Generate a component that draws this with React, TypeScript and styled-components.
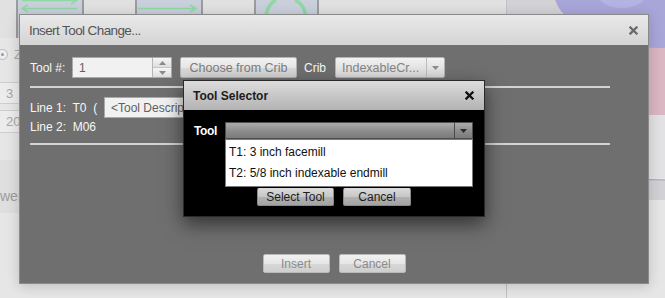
import React from 'react';
import styled, { createGlobalStyle } from 'styled-components';

const GlobalStyle = createGlobalStyle`
  html, body {
    margin: 0;
    padding: 0;
  }
  body {
    font-family: "Liberation Sans", Arial, sans-serif;
    background: #e6e6e6;
  }
`;

const Page = styled.div`
   position: relative;
   width: 665px;
   height: 298px;
   overflow: hidden;
   background: #e7e7e7;
   font-size: 12px;
`;

/* ---------- background app ---------- */

const Workspace = styled.div`
   display: grid;
   grid-template-columns: 507px 158px;
   height: 100%;
`;

const SidePanel = styled.div`
   display: flex;
   flex-direction: column;
   border-right: 1px solid #c2c2c2;
   background: #e6e6e6;
`;

const Toolbar = styled.div`
   display: flex;
   gap: 51px;
   padding-left: 16px;
   height: 38px;
   flex: none;
   background: #e1e1e1;
`;

const ToolBox = styled.div<{ $w: number }>`
   width: ${({ $w }) => $w}px;
   height: 38px;
   box-sizing: border-box;
   border-left: 2px solid #9c9c9c;
   border-right: 2px solid #9c9c9c;
   background: #c9d0dc;
   svg { display: block; }
`;

const RadioRow = styled.div`
   display: flex;
   align-items: center;
   gap: 6px;
   margin: 11px 0 0 -3px;
   height: 10px;
   color: #a8a8a8;
   font-size: 13px;
`;

const Radio = styled.span`
   width: 9px;
   height: 9px;
   border-radius: 50%;
   border: 1px solid #b8b8b8;
   background: #eee;
   display: flex;
   align-items: center;
   justify-content: center;
   &::after {
      content: '';
      width: 3px;
      height: 3px;
      border-radius: 50%;
      background: #9a9a9a;
   }
`;

const GhostField = styled.div<{ $top: number; $h: number }>`
   margin: ${({ $top }) => $top}px 0 0 -3px;
   width: 140px;
   height: ${({ $h }) => $h}px;
   box-sizing: border-box;
   border: 1px solid #cdcdcd;
   background: #ececec;
   color: #a6a6a6;
   font-size: 13px;
   padding-left: 8px;
   display: flex;
   align-items: center;
`;

const GhostBand = styled.div`
   margin-top: 27px;
   height: 53px;
   background: #dfdfdf;
   display: flex;
   align-items: flex-end;
   padding-bottom: 9px;
   box-sizing: border-box;
   color: #9c9c9c;
   font-size: 14px;
`;

const Viewport = styled.div`
   svg { display: block; }
`;

/* ---------- main dialog ---------- */

const Dialog = styled.div`
   position: absolute;
   left: 19px;
   top: 14px;
   width: 630px;
   height: 270px;
   box-sizing: border-box;
   border: 1px solid #8a8a8a;
   background: #6f6f6f;
   box-shadow: 0 2px 12px rgba(0, 0, 0, 0.18);
   display: flex;
   flex-direction: column;
`;

const DialogHeader = styled.div`
   flex: none;
   height: 30px;
   display: flex;
   align-items: center;
   justify-content: space-between;
   padding: 0 10px 0 9px;
   background: linear-gradient(#e9e9e9, #d4d4d4);
   color: #555;
   font-size: 13.5px;
   letter-spacing: -0.6px;
`;

const DialogBody = styled.div`
   flex: 1;
   display: flex;
   flex-direction: column;
   padding: 12px 0 10px 10px;
   color: #f6f6f6;
`;

const Row = styled.div<{ $top?: number }>`
   display: flex;
   align-items: center;
   height: 21px;
   margin-top: ${({ $top }) => $top ?? 0}px;
`;

const Label = styled.span<{ $w: number }>`
   width: ${({ $w }) => $w}px;
   flex: none;
   white-space: nowrap;
`;

const TextBox = styled.div<{ $w: number }>`
   width: ${({ $w }) => $w}px;
   height: 21px;
   box-sizing: border-box;
   flex: none;
   display: flex;
   border: 1px solid #a9a9a9;
   background: #f1f1f1;
   color: #606060;
   font-size: 12px;
   span {
      flex: 1;
      padding-left: 6px;
      display: flex;
      align-items: center;
      white-space: nowrap;
      overflow: hidden;
   }
`;

const Spinner = styled.div`
   width: 18px;
   display: flex;
   flex-direction: column;
   border-left: 1px solid #b5b5b5;
`;

const SpinHalf = styled.div`
   flex: 1;
   display: flex;
   align-items: center;
   justify-content: center;
   background: linear-gradient(#f5f5f5, #dedede);
   & + & {
      border-top: 1px solid #c6c6c6;
   }
`;

const LightButton = styled.div<{ $w: number; $ml?: number }>`
   width: ${({ $w }) => $w}px;
   margin-left: ${({ $ml }) => $ml ?? 0}px;
   height: 21px;
   box-sizing: border-box;
   flex: none;
   border: 1px solid #b4b4b4;
   border-radius: 2px;
   background: linear-gradient(#f2f2f2 0%, #e7e7e7 50%, #d9d9d9 52%, #d2d2d2 100%);
   color: #7c7c7c;
   display: flex;
   align-items: center;
   justify-content: center;
   font-size: 12.5px;
`;

const DropSelect = styled.div<{ $w: number }>`
   width: ${({ $w }) => $w}px;
   height: 21px;
   box-sizing: border-box;
   flex: none;
   display: flex;
   border: 1px solid #b4b4b4;
   border-radius: 2px;
   background: linear-gradient(#f2f2f2, #d8d8d8);
   color: #848484;
   font-size: 12.5px;
   span {
      flex: 1;
      padding-left: 6px;
      display: flex;
      align-items: center;
   }
`;

const DropArrow = styled.div<{ $dark?: boolean }>`
   width: 17px;
   flex: none;
   border-left: 1px solid ${({ $dark }) => ($dark ? '#4a4a4a' : '#bdbdbd')};
   display: flex;
   align-items: center;
   justify-content: center;
`;

const Rule = styled.div<{ $top: number }>`
   width: 580px;
   height: 2px;
   flex: none;
   margin-top: ${({ $top }) => $top}px;
   background: #d3d3d3;
`;

const PlainLine = styled.div`
   height: 14px;
   line-height: 14px;
   margin-top: 2px;
`;

const Footer = styled.div`
   margin-top: auto;
   display: flex;
   justify-content: center;
   gap: 9px;
   padding-right: 10px;
`;

const FooterButton = styled.div`
   width: 67px;
   height: 19px;
   box-sizing: border-box;
   border: 1px solid #b9b9b9;
   border-radius: 2px;
   background: linear-gradient(#f1f1f1 0%, #e6e6e6 50%, #d7d7d7 52%, #cfcfcf 100%);
   color: #8a8a8a;
   display: flex;
   align-items: center;
   justify-content: center;
`;

/* ---------- tool selector ---------- */

const Selector = styled.div`
   position: absolute;
   left: 163px;
   top: 65px;
   width: 302px;
   height: 137px;
   box-sizing: border-box;
   border: 1px solid #2a2a2a;
   background: #000;
   box-shadow: 0 7px 18px rgba(0, 0, 0, 0.55);
   display: flex;
   flex-direction: column;
`;

const SelectorHeader = styled.div`
   flex: none;
   height: 29px;
   display: flex;
   align-items: center;
   justify-content: space-between;
   padding: 0 10px 0 9px;
   background: linear-gradient(#dcdcdc, #b3b3b3);
   color: #1c1c1c;
   font-weight: bold;
   font-size: 12px;
`;

const SelectorBody = styled.div`
   position: relative;
   flex: 1;
   padding: 12px 0 0 10px;
   color: #fff;
`;

const ToolRow = styled.div`
   display: flex;
   align-items: center;
   height: 17px;
`;

const ToolLabel = styled.span`
   width: 31px;
   font-weight: bold;
   letter-spacing: -0.4px;
`;

const DarkSelect = styled.div`
   width: 248px;
   height: 17px;
   box-sizing: border-box;
   display: flex;
   border: 1px solid #4f4f4f;
   background: linear-gradient(#ababab, #8c8c8c 55%, #7b7b7b);
   span { flex: 1; }
`;

const OptionList = styled.div`
   position: absolute;
   left: 41px;
   top: 29px;
   width: 248px;
   height: 48px;
   box-sizing: border-box;
   border: 1px solid #7a7a7a;
   background: #fff;
   color: #111;
   padding-top: 2px;
`;

const Option = styled.div`
   height: 21px;
   line-height: 21px;
   padding-left: 3px;
   white-space: nowrap;
`;

const SelectorButtons = styled.div`
   display: flex;
   justify-content: center;
   gap: 9px;
   margin: 49px 10px 0 0;
`;

const DarkButton = styled.div<{ $w: number }>`
   width: ${({ $w }) => $w}px;
   height: 18px;
   box-sizing: border-box;
   border: 1px solid #8a8a8a;
   border-top-color: #d8d8d8;
   border-radius: 2px;
   background: linear-gradient(#d9d9d9 0%, #c6c6c6 50%, #b1b1b1 52%, #a3a3a3 100%);
   color: #1d1d1d;
   display: flex;
   align-items: center;
   justify-content: center;
`;

/* ---------- drawings ---------- */

const CloseIcon = ({ color }: { color: string }) => (
   <svg width="9" height="9" viewBox="0 0 9 9">
      <path d="M1.5 1.5 L7.5 7.5 M7.5 1.5 L1.5 7.5" stroke={color} strokeWidth="2.3" strokeLinecap="square" />
   </svg>
);

const Caret = ({ up, color }: { up?: boolean; color: string }) => (
   <svg width="7" height="4" viewBox="0 0 7 4">
      <path d={up ? 'M0 4 L3.5 0 L7 4 Z' : 'M0 0 L7 0 L3.5 4 Z'} fill={color} />
   </svg>
);

const green = '#8fd8a6';

const ArrowsIcon = () => (
   <svg width="64" height="38" viewBox="0 0 64 38">
      <path d="M4 0.5 H58" stroke={green} strokeWidth="1.5" />
      <path d="M53 -3 L59 0.5 L53 4" stroke={green} strokeWidth="1.5" fill="none" />
      <path d="M5 8.5 H59" stroke={green} strokeWidth="1.5" />
      <path d="M10 5 L4 8.5 L10 12" stroke={green} strokeWidth="1.5" fill="none" />
   </svg>
);

const RightArrowIcon = () => (
   <svg width="64" height="38" viewBox="0 0 64 38">
      <path d="M1 8.5 H59" stroke={green} strokeWidth="1.5" />
      <path d="M53 5 L59 8.5 L53 12" stroke={green} strokeWidth="1.5" fill="none" />
   </svg>
);

const RefreshIcon = () => (
   <svg width="61" height="38" viewBox="0 0 61 38">
      <path d="M20 0 A18.5 18.5 0 0 0 12 24" stroke={green} strokeWidth="3.5" fill="none" />
      <path d="M39 0 A18.5 18.5 0 0 1 48 24" stroke={green} strokeWidth="3.5" fill="none" />
   </svg>
);

const ViewportArt = () => (
   <svg width="158" height="298" viewBox="0 0 158 298">
      <rect x="0" y="0" width="158" height="298" fill="#e6e6e6" />
      <rect x="0" y="0" width="158" height="115" fill="#d3d3d7" />
      <rect x="95" y="30" width="63" height="85" fill="#dab7c2" />
      <ellipse cx="150" cy="-12" rx="104" ry="60" fill="#a8a6d9" />
      <ellipse cx="115" cy="-6" rx="24" ry="14" fill="#b5b3e1" />
      <rect x="0" y="115" width="158" height="63" fill="#e2e2e4" />
      <path d="M0 176 L158 180 L158 200 L0 200 Z" fill="#d2d2d6" />
      <path d="M0 176 L158 180" stroke="#a3a3a8" strokeWidth="1" />
   </svg>
);

export default function App() {
   return (
      <Page>
         <GlobalStyle />
         <Workspace>
            <SidePanel>
               <Toolbar>
                  <ToolBox $w={68}><ArrowsIcon /></ToolBox>
                  <ToolBox $w={68}><RightArrowIcon /></ToolBox>
                  <ToolBox $w={65}><RefreshIcon /></ToolBox>
               </Toolbar>
               <RadioRow><Radio />Z</RadioRow>
               <GhostField $top={23} $h={22}>3</GhostField>
               <GhostField $top={6} $h={23}>200</GhostField>
               <GhostBand>wer</GhostBand>
            </SidePanel>
            <Viewport><ViewportArt /></Viewport>
         </Workspace>

         <Dialog>
            <DialogHeader>
               <span>Insert Tool Change...</span>
               <CloseIcon color="#6a6a6a" />
            </DialogHeader>
            <DialogBody>
               <Row>
                  <Label $w={42}>Tool #:</Label>
                  <TextBox $w={100}>
                     <span>1</span>
                     <Spinner>
                        <SpinHalf><Caret up color="#8a8a8a" /></SpinHalf>
                        <SpinHalf><Caret color="#8a8a8a" /></SpinHalf>
                     </Spinner>
                  </TextBox>
                  <LightButton $w={117} $ml={8}>Choose from Crib</LightButton>
                  <Label $w={31} style={{ marginLeft: 7 }}>Crib</Label>
                  <DropSelect $w={110}>
                     <span>IndexableCr...</span>
                     <DropArrow><Caret color="#8c8c8c" /></DropArrow>
                  </DropSelect>
               </Row>
               <Rule $top={8} />
               <Row $top={9}>
                  <Label $w={74}>Line 1:&nbsp; T0&nbsp; (</Label>
                  <TextBox $w={280}>
                     <span>&lt;Tool Description&gt;</span>
                  </TextBox>
               </Row>
               <PlainLine>Line 2:&nbsp; M06</PlainLine>
               <Rule $top={9} />
               <Footer>
                  <FooterButton>Insert</FooterButton>
                  <FooterButton>Cancel</FooterButton>
               </Footer>
            </DialogBody>

            <Selector>
               <SelectorHeader>
                  <span>Tool Selector</span>
                  <CloseIcon color="#111" />
               </SelectorHeader>
               <SelectorBody>
                  <ToolRow>
                     <ToolLabel>Tool</ToolLabel>
                     <DarkSelect>
                        <span />
                        <DropArrow $dark><Caret color="#2a2a2a" /></DropArrow>
                     </DarkSelect>
                  </ToolRow>
                  <OptionList>
                     <Option>T1: 3 inch facemill</Option>
                     <Option>T2: 5/8 inch indexable endmill</Option>
                  </OptionList>
                  <SelectorButtons>
                     <DarkButton $w={77}>Select Tool</DarkButton>
                     <DarkButton $w={68}>Cancel</DarkButton>
                  </SelectorButtons>
               </SelectorBody>
            </Selector>
         </Dialog>
      </Page>
   );
}
